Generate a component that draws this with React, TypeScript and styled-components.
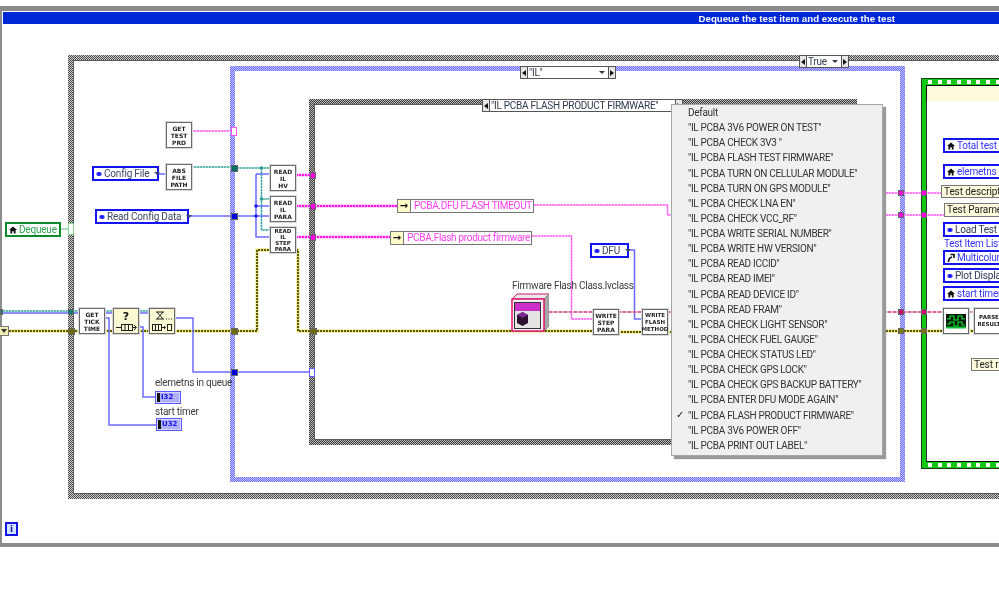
import React from "react";
import styled, { createGlobalStyle } from "styled-components";

const Global = createGlobalStyle`
  html, body { margin: 0; padding: 0; background: #fff; }
  #root { width: 999px; height: 592px; }
`;

const SANS = `Roboto, "Liberation Sans", sans-serif`;

const Page = styled.div`
  position: relative;
  width: 999px;
  height: 592px;
  overflow: hidden;
  background: #fff;
  font-family: ${SANS};
  filter: blur(0.35px);
`;

const Window = styled.div`
  margin-top: 6px;
  height: 541px;
  box-sizing: border-box;
  border: solid #8c8c8c;
  border-width: 5px 0 4px 2px;
  padding: 1px 0 0 1px;
  background: #fff;
`;

const TitleBar = styled.div`
  height: 12px;
  background: #0028d6;
  color: #fff;
  display: flex;
  align-items: center;
  justify-content: flex-end;
  padding-right: 104px;
  font: bold 9.7px "Liberation Sans", sans-serif;
  white-space: nowrap;
`;

const Canvas = styled.div`
  position: absolute;
  inset: 0;
`;

type Box = { $x: number; $y: number; $w: number; $h: number };

const placed = (p: Box) => `left:${p.$x}px;top:${p.$y}px;width:${p.$w}px;height:${p.$h}px;`;

const frameColors = {
  dark: ["#4a4a4a", "#d0d0d0"],
  darker: ["#3c3c3c", "#b8b8b8"],
  lav: ["#6c6cff", "#c4c4ff"],
};

const Frame = styled.div<Box & { $kind: "dark" | "darker" | "lav" }>`
  position: absolute;
  ${placed}
  box-sizing: border-box;
  border: 5px solid transparent;
  background:
    linear-gradient(#fff, #fff) padding-box,
    repeating-conic-gradient(
        ${(p) => frameColors[p.$kind][0]} 0 25%,
        ${(p) => frameColors[p.$kind][1]} 0 50%
      )
      0 0 / 2px 2px border-box;
  box-shadow: ${(p) => (p.$kind === "lav" ? "none" : "inset 0 0 0 1px #5a5a5a")};
`;

const GreenFrame = styled.div<Box>`
  position: absolute;
  ${placed}
  display: flex;
  flex-direction: column;
  background: #12c812;
  border: 1px solid #1c3a1c;
  box-sizing: border-box;
`;

const Sprocket = styled.div`
  height: 6px;
  flex: none;
  background-image: repeating-linear-gradient(90deg, #fff 0 4px, transparent 4px 9.7px);
  background-size: 100% 4px;
  background-repeat: no-repeat;
  background-position: 6px 1px;
`;

const CreamBar = styled.div`
  height: 16px;
  flex: none;
  margin-left: 4px;
  background: #fdf9dc;
  border-top: 1px solid #111;
  border-left: 1px solid #111;
  box-sizing: border-box;
`;

const GreenBody = styled.div`
  flex: 1;
  margin-left: 4px;
  background: #fff;
  border-left: 1px solid #333;
  border-bottom: 1px solid #111;
`;

const Selector = styled.div<{ $x: number; $y: number; $w: number }>`
  position: absolute;
  left: ${(p) => p.$x}px;
  top: ${(p) => p.$y}px;
  width: ${(p) => p.$w}px;
  height: 13px;
  box-sizing: border-box;
  display: flex;
  background: #fff;
  border: 1px solid #555;
  font-size: 10px;
  line-height: 11px;
  letter-spacing: -0.25px;
  color: #2f3a4a;
`;

const SelArrow = styled.div<{ $dir: "l" | "r" }>`
  width: 6px;
  flex: none;
  background: #e6e6e6;
  border-${(p) => (p.$dir === "l" ? "right" : "left")}: 1px solid #555;
  display: flex;
  align-items: center;
  justify-content: center;
  &::before {
    content: "";
    border: 3px solid transparent;
    border-${(p) => (p.$dir === "l" ? "right" : "left")}: 4px solid #111;
    ${(p) => (p.$dir === "l" ? "border-left-width:0" : "border-right-width:0")};
  }
`;

const SelLabel = styled.div`
  flex: 1;
  min-width: 0;
  padding: 0 3px 0 1px;
  display: flex;
  align-items: center;
  justify-content: space-between;
  white-space: nowrap;
`;

const DownTri = styled.span`
  border: 3px solid transparent;
  border-top: 3px solid currentColor;
  border-bottom-width: 0;
  flex: none;
  margin-left: 3px;
`;

const WireLayer = styled.svg`
  position: absolute;
  left: 0;
  top: 0;
`;

const Term = styled.div<Box & { $color: string; $open?: boolean }>`
  position: absolute;
  ${placed}
  box-sizing: border-box;
  background: ${(p) => (p.$open ? "#fff" : p.$color)};
  border: 1px solid ${(p) => (p.$open ? p.$color : "#666")};
`;

const Node = styled.div<{ $x: number; $y: number; $w?: number; $fill?: string; $size?: number; $lh?: number }>`
  position: absolute;
  left: ${(p) => p.$x}px;
  top: ${(p) => p.$y}px;
  width: ${(p) => p.$w ?? 26}px;
  height: 26px;
  box-sizing: border-box;
  background: ${(p) => p.$fill ?? "#fff"};
  border: 1px solid #6a6a6a;
  outline: 1px solid #d8d8d8;
  display: flex;
  align-items: center;
  justify-content: center;
  text-align: center;
  font: bold ${(p) => p.$size ?? 6}px/${(p) => p.$lh ?? 7}px "DejaVu Sans", sans-serif;
  color: #222;
  white-space: pre-line;
`;

const Ctl = styled.div<{ $x: number; $y: number; $w: number; $h?: number; $tone: string; $text: string }>`
  position: absolute;
  left: ${(p) => p.$x}px;
  top: ${(p) => p.$y}px;
  width: ${(p) => p.$w}px;
  height: ${(p) => p.$h ?? 15}px;
  box-sizing: border-box;
  background: #fff;
  border: 2px solid ${(p) => p.$tone};
  color: ${(p) => p.$text};
  display: flex;
  align-items: center;
  gap: 2px;
  padding: 0 3px 0 2px;
  font-size: 10px;
  line-height: 11px;
  letter-spacing: -0.2px;
  white-space: nowrap;
`;

const EnumDot = styled.span`
  flex: none;
  width: 4px;
  height: 4px;
  border-radius: 50%;
  background: #1a1aff;
  box-shadow: -1px 0 0 0 #88f, 1px 0 0 0 #88f;
  margin: 0 1px;
`;

const CtlText = styled.span`
  flex: 1;
`;

const PropNode = styled.div<{ $x: number; $y: number; $w: number; $h?: number }>`
  position: absolute;
  left: ${(p) => p.$x}px;
  top: ${(p) => p.$y}px;
  width: ${(p) => p.$w}px;
  height: ${(p) => p.$h ?? 13}px;
  box-sizing: border-box;
  background: #fdfbdc;
  border: 1px solid #777;
  padding-left: 2px;
  font-size: 10px;
  line-height: 11px;
  letter-spacing: -0.1px;
  color: #222;
  white-space: nowrap;
`;

const Bundle = styled.div<{ $x: number; $y: number; $w: number }>`
  position: absolute;
  left: ${(p) => p.$x}px;
  top: ${(p) => p.$y}px;
  width: ${(p) => p.$w}px;
  height: 14px;
  box-sizing: border-box;
  display: flex;
  background: #fff;
  border: 1px solid #777;
  font-size: 10px;
  line-height: 12px;
  letter-spacing: -0.3px;
  color: #ff3cf0;
  white-space: nowrap;
`;

const BundleArrow = styled.div`
  width: 12px;
  flex: none;
  background: #fdfbc8;
  border-right: 1px solid #777;
  color: #111;
  font: bold 10px/11px "DejaVu Sans", sans-serif;
  letter-spacing: 0;
  text-align: center;
  margin-right: 3px;
`;

const Caption = styled.div<{ $x: number; $y: number; $color?: string }>`
  position: absolute;
  left: ${(p) => p.$x}px;
  top: ${(p) => p.$y}px;
  font-size: 10px;
  line-height: 12px;
  letter-spacing: -0.25px;
  color: ${(p) => p.$color ?? "#3c3c3c"};
  white-space: nowrap;
`;

const NumInd = styled.div<{ $x: number; $y: number }>`
  position: absolute;
  left: ${(p) => p.$x}px;
  top: ${(p) => p.$y}px;
  width: 26px;
  height: 13px;
  box-sizing: border-box;
  border: 1px solid #5a5aff;
  background: #d8d8ff;
  display: flex;
  align-items: center;
  padding: 1px;
`;

const NumInner = styled.div`
  flex: 1;
  height: 100%;
  box-sizing: border-box;
  background: #b0b0ff;
  border-left: 3px solid #111;
  color: #1616e0;
  font: bold 7px/9px "DejaVu Sans", sans-serif;
  padding-left: 1px;
`;

const InfoIcon = styled.div`
  position: absolute;
  left: 5px;
  top: 522px;
  width: 13px;
  height: 14px;
  box-sizing: border-box;
  border: 2px solid #1414e0;
  background: #d4e4ff;
  color: #1414a0;
  font: bold 9px/10px "DejaVu Sans", sans-serif;
  text-align: center;
`;

const Shift = styled.div`
  position: absolute;
  left: -1px;
  top: 326px;
  width: 10px;
  height: 10px;
  box-sizing: border-box;
  background: #f4efb0;
  border: 1px solid #777;
  display: flex;
  align-items: center;
  justify-content: center;
  &::before {
    content: "";
    border: 3px solid transparent;
    border-top: 4px solid #333;
    border-bottom-width: 0;
  }
`;

const MenuPanel = styled.div`
  position: absolute;
  left: 671px;
  top: 104px;
  width: 212px;
  height: 352px;
  box-sizing: border-box;
  padding-top: 0.5px;
  background: #f0f0f0;
  border: 1px solid #a6a6a6;
  box-shadow: 3px 3px 1px #9a9a9a;
  display: flex;
  flex-direction: column;
`;

const MenuRow = styled.div`
  height: 15.13px;
  flex: none;
  display: flex;
  align-items: center;
  padding-left: 16px;
  position: relative;
  font-size: 10px;
  line-height: 12px;
  letter-spacing: -0.3px;
  color: #333;
  white-space: nowrap;
`;

const Check = styled.span`
  position: absolute;
  left: 4px;
  top: 1px;
  font: 10px "DejaVu Sans", sans-serif;
  color: #111;
`;

const ClassBox = styled.svg`
  position: absolute;
  left: 511px;
  top: 293px;
`;

const NodeIcon = styled.svg`
  display: block;
`;

type WireKind = "pink" | "pinkThin" | "teal" | "blue" | "err" | "class" | "green";

const wireStyle: Record<WireKind, { w: number; base: string; dash?: string; pat?: string }> = {
  pink: { w: 3, base: "#ffa6f6", dash: "#ff14e6", pat: "2 1" },
  pinkThin: { w: 2, base: "#ffc0fb", dash: "#ff40f0", pat: "2 1" },
  teal: { w: 2, base: "#b0dcd8", dash: "#2a9a92", pat: "2 1" },
  blue: { w: 1.5, base: "#6a6aff" },
  err: { w: 3, base: "#e8e070", dash: "#5c5a00", pat: "2 1" },
  class: { w: 2, base: "#f2b6cf", dash: "#c4146c", pat: "3 2" },
  green: { w: 1, base: "#58b878" },
};

const wires: [WireKind, string][] = [
  ["pinkThin", "191,131 231,131"],
  ["blue", "159,174 166,174"],
  ["teal", "191,167 231,167"],
  ["teal", "237,168 270,168"],
  ["teal", "261.5,168 261.5,230 270,230"],
  ["teal", "261.5,199 270,199"],
  ["blue", "189,216 231,216"],
  ["blue", "237,216 270,216"],
  ["blue", "256,174 270,174"],
  ["blue", "256,174 256,237 270,237"],
  ["blue", "256,206 270,206"],
  ["pink", "296,175 310,175"],
  ["pink", "296,206 398,206"],
  ["pink", "296,237 390,237"],
  ["green", "61,229 68,229"],
  ["teal", "3,311 79,311"],
  ["blue", "3,313 79,313"],
  ["teal", "104,311 149,311"],
  ["blue", "104,313 149,313"],
  ["err", "0,331 79,331"],
  ["err", "104,331 113,331"],
  ["err", "138,331 149,331"],
  ["err", "174,331 257,331 257,250 270,250"],
  ["err", "296,250 298,250 298,331 593,331"],
  ["err", "618,332 642,332"],
  ["err", "667,332 672,332"],
  ["blue", "104,318 109,318 109,425 156,425"],
  ["blue", "138,327 143,327 143,397 155,397"],
  ["blue", "174,318 193,318 193,372 231,372"],
  ["blue", "237,372 309,372"],
  ["pinkThin", "534,205 667.5,205 667.5,215 672,215"],
  ["pinkThin", "532,236 571.5,236 571.5,319 593,319"],
  ["blue", "629,250 634.5,250 634.5,319 642,319"],
  ["class", "549,312 593,312"],
  ["class", "618,312 642,312"],
  ["class", "667,312 672,312"],
  ["pinkThin", "883,193 942,193"],
  ["pinkThin", "883,215 945,215"],
  ["class", "883,312 943,312"],
  ["err", "883,331 943,331"],
  ["class", "968,312 974,312"],
  ["err", "968,331 974,331"],
];

const terms: [number, number, number, number, string, boolean?][] = [
  [231, 127, 6, 9, "#ff50f0", true],
  [231, 165, 7, 7, "#006c66"],
  [231, 213, 7, 7, "#0000e0"],
  [231, 328, 7, 7, "#6e6a10"],
  [231, 369, 7, 7, "#0000e0"],
  [68, 223, 6, 12, "#80d890", true],
  [68, 309, 6, 6, "#0c7a78"],
  [68, 328, 7, 7, "#6e6a10"],
  [0, 309, 3, 6, "#0c7a78"],
  [310, 172, 6, 7, "#ff00e0"],
  [310, 203, 6, 7, "#ff00e0"],
  [310, 234, 6, 7, "#ff00e0"],
  [310, 328, 7, 7, "#6e6a10"],
  [309, 368, 6, 9, "#5a5aff", true],
  [898, 190, 6, 6, "#ff00e0"],
  [898, 212, 6, 6, "#ff00e0"],
  [898, 309, 6, 6, "#c80a6a"],
  [898, 328, 6, 6, "#7a7610"],
  [921, 190, 6, 6, "#ff00e0"],
  [921, 212, 6, 6, "#ff00e0"],
  [921, 309, 6, 6, "#c80a6a"],
  [921, 328, 6, 6, "#7a7610"],
];

const menuItems = [
  "Default",
  '"IL PCBA 3V6 POWER ON TEST"',
  '"IL PCBA CHECK 3V3 "',
  '"IL PCBA FLASH TEST FIRMWARE"',
  '"IL PCBA TURN ON CELLULAR MODULE"',
  '"IL PCBA TURN ON GPS MODULE"',
  '"IL PCBA CHECK LNA EN"',
  '"IL PCBA CHECK VCC_RF"',
  '"IL PCBA WRITE SERIAL NUMBER"',
  '"IL PCBA WRITE HW VERSION"',
  '"IL PCBA READ ICCID"',
  '"IL PCBA READ IMEI"',
  '"IL PCBA READ DEVICE ID"',
  '"IL PCBA READ FRAM"',
  '"IL PCBA CHECK LIGHT SENSOR"',
  '"IL PCBA CHECK FUEL GAUGE"',
  '"IL PCBA CHECK STATUS LED"',
  '"IL PCBA CHECK GPS LOCK"',
  '"IL PCBA CHECK GPS BACKUP BATTERY"',
  '"IL PCBA ENTER DFU MODE AGAIN"',
  '"IL PCBA FLASH PRODUCT FIRMWARE"',
  '"IL PCBA 3V6 POWER OFF"',
  '"IL PCBA PRINT OUT LABEL"',
];

const House = () => (
  <svg width="8" height="8" viewBox="0 0 8 8" style={{ flex: "none" }}>
    <path d="M4 0.5 L8 4 H6.6 V7.5 H4.8 V5.2 H3.2 V7.5 H1.4 V4 H0 Z" fill="#111" />
  </svg>
);

const RefArrow = () => (
  <svg width="8" height="10" viewBox="0 0 8 10" style={{ flex: "none" }}>
    <path d="M1.5 9 C1.5 6 3 4.5 5 4 M3.5 1.5 H7 V5" fill="none" stroke="#111" strokeWidth="1.6" />
  </svg>
);

const QueueStatusIcon = () => (
  <NodeIcon width="24" height="24" viewBox="0 0 24 24">
    <text x="12" y="11" textAnchor="middle" fontFamily="DejaVu Sans" fontWeight="bold" fontSize="11" fill="#111">?</text>
    <path d="M2 18.5 H7 M19 18.5 H22 M20 16 L22.5 18.5 L20 21" fill="none" stroke="#222" />
    <rect x="7.5" y="15.5" width="11" height="6" fill="none" stroke="#222" />
    <path d="M11 15.5 V21.5 M14.5 15.5 V21.5" stroke="#222" />
  </NodeIcon>
);

const DequeueIcon = () => (
  <NodeIcon width="24" height="24" viewBox="0 0 24 24">
    <path d="M6 3 H14 M7 3 L10 6.5 L7 10 M13 3 L10 6.5 L13 10 M6 10 H14" fill="none" stroke="#222" />
    <path d="M16 10 h1 M18.5 10 h1 M21 10 h1" stroke="#222" />
    <rect x="2.5" y="15.5" width="9" height="6" fill="none" stroke="#222" />
    <path d="M5.5 15.5 V21.5 M8.5 15.5 V21.5" stroke="#222" />
    <path d="M12 18.5 H15 M14 17 L15.5 18.5 L14 20" fill="none" stroke="#222" />
    <rect x="17.5" y="15.5" width="4" height="6" fill="none" stroke="#222" />
  </NodeIcon>
);

const ScopeIcon = () => (
  <NodeIcon width="24" height="24" viewBox="0 0 24 24">
    <rect x="2" y="5" width="20" height="14" fill="#0a1a0a" />
    <path d="M3 10 H6 V7 H10 V11 H14 V7 H18 V10 H21" fill="none" stroke="#10e030" strokeWidth="1.2" />
    <path d="M3 15 H6 V13 H10 V17 H14 V13 H18 V16 H21" fill="none" stroke="#10e030" strokeWidth="1.2" />
    <rect x="2" y="17.5" width="20" height="2" fill="#10c030" />
  </NodeIcon>
);

export default function App() {
  return (
    <Page>
      <Global />
      <Window>
        <TitleBar>Dequeue the test item and execute the test</TitleBar>
      </Window>
      <Canvas>
        <Frame $kind="dark" $x={68} $y={55} $w={960} $h={444} />
        <Frame $kind="lav" $x={230} $y={66} $w={675} $h={416} />
        <Frame $kind="darker" $x={309} $y={99} $w={548} $h={346} />
        <GreenFrame $x={921} $y={78} $w={110} $h={391}>
          <Sprocket />
          <CreamBar />
          <GreenBody />
          <Sprocket />
        </GreenFrame>

        <WireLayer width="999" height="592">
          {wires.map(([kind, pts], i) => {
            const s = wireStyle[kind];
            return (
              <g key={i} fill="none">
                <polyline points={pts} stroke={s.base} strokeWidth={s.w} />
                {s.dash && <polyline points={pts} stroke={s.dash} strokeWidth={s.w - 1} strokeDasharray={s.pat} />}
              </g>
            );
          })}
          <circle cx="261.5" cy="168" r="1.8" fill="#2a9a92" />
          <circle cx="261.5" cy="199" r="1.8" fill="#2a9a92" />
          <circle cx="256" cy="206" r="1.8" fill="#1a1aff" />
          <circle cx="256" cy="216" r="1.8" fill="#1a1aff" />
        </WireLayer>

        {terms.map(([x, y, w, h, c, open], i) => (
          <Term key={i} $x={x} $y={y} $w={w} $h={h} $color={c} $open={open} />
        ))}

        <Selector $x={799} $y={55} $w={50}>
          <SelArrow $dir="l" />
          <SelLabel>True<DownTri /></SelLabel>
          <SelArrow $dir="r" />
        </Selector>
        <Selector $x={520} $y={66} $w={96}>
          <SelArrow $dir="l" />
          <SelLabel>"IL"<DownTri /></SelLabel>
          <SelArrow $dir="r" />
        </Selector>
        <Selector $x={482} $y={99} $w={201}>
          <SelArrow $dir="l" />
          <SelLabel>"IL PCBA FLASH PRODUCT FIRMWARE"</SelLabel>
          <SelArrow $dir="r" />
        </Selector>

        <Node $x={166} $y={122}>{"GET\nTEST\nPRD"}</Node>
        <Node $x={166} $y={164}>{"ABS\nFILE\nPATH"}</Node>
        <Node $x={270} $y={165}>{"READ\nIL\nHV"}</Node>
        <Node $x={270} $y={196}>{"READ\nIL\nPARA"}</Node>
        <Node $x={270} $y={227} $size={5.5} $lh={6}>{"READ\nIL\nSTEP\nPARA"}</Node>
        <Node $x={79} $y={308}>{"GET\nTICK\nTIME"}</Node>
        <Node $x={113} $y={308} $fill="#fbf8d4"><QueueStatusIcon /></Node>
        <Node $x={149} $y={308} $fill="#fbf8d4"><DequeueIcon /></Node>
        <Node $x={593} $y={309}>{"WRITE\nSTEP\nPARA"}</Node>
        <Node $x={642} $y={309} $size={5.5}>{"WRITE\nFLASH\nMETHOD"}</Node>
        <Node $x={943} $y={308}><ScopeIcon /></Node>
        <Node $x={974} $y={308} $w={30} $size={5.5}>{"PARSE\nRESULT"}</Node>

        <ClassBox width="38" height="39" viewBox="0 0 38 39">
          <polygon points="1,6 6,1 38,1 33,6" fill="#e8e8e8" stroke="#d0186c" />
          <polygon points="33,6 38,1 38,33 33,38" fill="#a8a8a8" stroke="#888" />
          <rect x="1" y="6" width="32" height="32" fill="#f2f2f2" stroke="#e01870" strokeWidth="1.5" />
          <rect x="3.5" y="9.5" width="26" height="26" fill="#e4e4e4" stroke="#333" />
          <rect x="4" y="10" width="25" height="8" fill="#cc30c8" />
          <polygon points="11.5,19 17,22 17,30 11.5,33 6,30 6,22" fill="#2c1030" />
          <polygon points="11.5,19 17,22 11.5,25 6,22" fill="#7c2a90" />
        </ClassBox>
        <Caption $x={512} $y={280}>Firmware Flash Class.lvclass</Caption>

        <Ctl $x={92} $y={166} $w={67} $tone="#1414f0" $text="#3a4668"><EnumDot /><CtlText>Config File</CtlText><DownTri /></Ctl>
        <Ctl $x={95} $y={209} $w={94} $tone="#1414f0" $text="#3a4668"><EnumDot /><CtlText>Read Config Data</CtlText><DownTri /></Ctl>
        <Ctl $x={590} $y={243} $w={39} $tone="#1414f0" $text="#3a4668"><EnumDot /><CtlText>DFU</CtlText><DownTri /></Ctl>
        <Ctl $x={5} $y={222} $w={56} $tone="#108a2c" $text="#2ca04c"><House /><CtlText>Dequeue</CtlText></Ctl>

        <Bundle $x={397} $y={199} $w={137}><BundleArrow>→</BundleArrow>PCBA.DFU FLASH TIMEOUT</Bundle>
        <Bundle $x={390} $y={231} $w={142}><BundleArrow>→</BundleArrow>PCBA.Flash product firmware</Bundle>

        <Caption $x={155} $y={377}>elemetns in queue</Caption>
        <NumInd $x={155} $y={391}><NumInner>I32</NumInner></NumInd>
        <Caption $x={155} $y={406}>start timer</Caption>
        <NumInd $x={156} $y={418}><NumInner>U32</NumInner></NumInd>

        <Ctl $x={943} $y={138} $w={100} $tone="#1414f0" $text="#3434ff"><House /><CtlText>Total test steps</CtlText></Ctl>
        <Ctl $x={943} $y={164} $w={100} $tone="#1414f0" $text="#3434ff"><House /><CtlText>elemetns in queue</CtlText></Ctl>
        <PropNode $x={941} $y={185} $w={100}>Test description</PropNode>
        <PropNode $x={944} $y={203} $w={100} $h={14}>Test Parameters</PropNode>
        <Ctl $x={943} $y={222} $w={100} $tone="#1414f0" $text="#2f3a5a"><EnumDot /><CtlText>Load Test Results</CtlText></Ctl>
        <Caption $x={944} $y={238} $color="#3434ff">Test Item List</Caption>
        <Ctl $x={943} $y={250} $w={100} $tone="#1414f0" $text="#3434ff"><RefArrow /><CtlText>Multicolumn</CtlText></Ctl>
        <Ctl $x={943} $y={268} $w={100} $tone="#1414f0" $text="#2f3a5a"><EnumDot /><CtlText>Plot Display</CtlText></Ctl>
        <Ctl $x={943} $y={286} $w={100} $tone="#1414f0" $text="#3434ff"><House /><CtlText>start timer!</CtlText></Ctl>
        <PropNode $x={971} $y={358} $w={60}>Test result</PropNode>

        <Shift />
        <InfoIcon>i</InfoIcon>

        <MenuPanel>
          {menuItems.map((m) => (
            <MenuRow key={m}>
              {m.includes("FLASH PRODUCT") && <Check>✓</Check>}
              {m}
            </MenuRow>
          ))}
        </MenuPanel>
      </Canvas>
    </Page>
  );
}
